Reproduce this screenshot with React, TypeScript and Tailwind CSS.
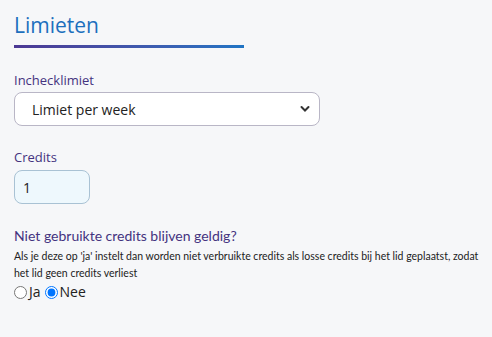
export default function App() {
  return (
    <div className="min-h-screen w-full bg-[#f6f7f9] pl-[14px] pr-[6px] pt-[10px] text-[#222] font-['Open_Sans',sans-serif]">
      <h1 className="text-[21px] leading-[30px] text-[#1c6fbd]">Limieten</h1>
      <div className="mt-[5px] h-[3px] w-[230px] bg-gradient-to-r from-[#4b3894] to-[#1f74c4]" />

      <div className="mt-[22px]">
        <label className="block text-[13px] leading-[20px] text-[#44337f]">Inchecklimiet</label>
        <div className="relative mt-[2px] w-[306px]">
          <select className="h-[34px] w-full appearance-none rounded-[8px] border border-[#b9b6c6] bg-white pl-[17px] text-[14px] text-[#222] outline-none">
            <option>Limiet per week</option>
          </select>
          <svg className="pointer-events-none absolute right-[10px] top-[13px] h-[8px] w-[10px]" viewBox="0 0 10 8">
            <path d="M1.5 2l3.5 3.5L8.5 2" fill="none" stroke="#333" strokeWidth="2" strokeLinecap="round" />
          </svg>
        </div>
      </div>

      <div className="mt-[21px]">
        <label className="block text-[13px] leading-[20px] text-[#44337f]">Credits</label>
        <input
          defaultValue="1"
          className="mt-[3px] h-[34px] w-[76px] rounded-[8px] border border-[#a9c2d4] bg-[#eef8fd] px-[8px] text-[14px] text-[#222] outline-none"
        />
      </div>

      <div className="mt-[22px] font-['Lato',sans-serif]">
        <p className="text-[14px] leading-[20px] text-[#44337f]">Niet gebruikte credits blijven geldig?</p>
        <p className="mt-[2px] text-[10.5px] leading-[17px] text-[#222]">
          Als je deze op 'ja' instelt dan worden niet verbruikte credits als losse credits bij het lid geplaatst, zodat het lid geen credits verliest
        </p>
        <div className="mt-[2px] flex items-center font-['Open_Sans',sans-serif] text-[14px] leading-[16px]">
          <input type="radio" name="geldig" className="m-0 h-[13px] w-[13px]" />
          <span className="ml-[2px]">Ja</span>
          <input type="radio" name="geldig" defaultChecked className="m-0 ml-[4px] h-[13px] w-[13px]" />
          <span className="ml-[2px]">Nee</span>
        </div>
      </div>
    </div>
  );
}
